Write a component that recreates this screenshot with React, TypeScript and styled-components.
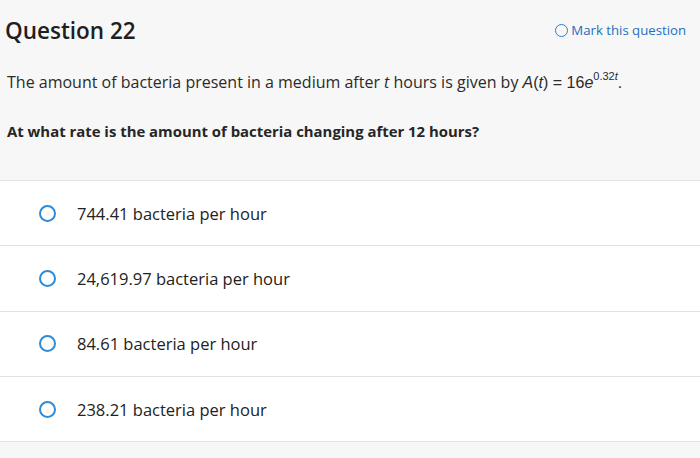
import React from 'react'
import styled, { createGlobalStyle } from 'styled-components'

const GlobalStyle = createGlobalStyle`
  html, body {
    margin: 0;
    padding: 0;
    background: #f7f7f7;
  }
  body {
    font-family: "Open Sans", Lato, sans-serif;
    color: #2b2b2b;
  }
`

const Page = styled.div`
  width: 700px;
  height: 458px;
  background: #f7f7f7;
  overflow: hidden;
`

const Header = styled.div`
  display: flex;
  align-items: center;
  justify-content: space-between;
  height: 60px;
  padding: 0 14px 0 5px;
`

const Title = styled.h1`
  margin: 0;
  font-size: 22.5px;
  font-weight: 600;
  color: #1f1f1f;
`

const MarkButton = styled.button`
  display: flex;
  align-items: center;
  gap: 3px;
  border: none;
  background: none;
  padding: 0;
  font-family: "Open Sans", sans-serif;
  font-size: 13.2px;
  font-weight: 500;
  color: #1a6fc0;
  cursor: pointer;
`

const SmallCircle = styled.span`
  display: inline-block;
  width: 11px;
  height: 11px;
  border: 1.6px solid #2c7fd0;
  border-radius: 50%;
`

const Prompt = styled.div`
  padding: 10px 7px 0;
  height: 110px;
`

const Text = styled.p`
  margin: 0;
  font-size: 16px;
  line-height: 24px;
  color: #2b2b2b;
`

const Math = styled.span`
  font-family: "Liberation Sans", Arial, sans-serif;
  font-size: 16px;
`

const Sup = styled.sup`
  font-size: 11px;
  vertical-align: 8px;
  line-height: 0;
`

const Ask = styled.p`
  margin: 26px 0 0;
  font-size: 14.9px;
  font-weight: 700;
  color: #262626;
`

const Options = styled.div`
  background: #ffffff;
  border-top: 1px solid #e2e2e2;
`

const Option = styled.label`
  display: flex;
  align-items: center;
  height: 65.3px;
  padding-left: 39px;
  border-bottom: 1px solid #e2e2e2;
  box-sizing: border-box;
  font-size: 16.5px;
  color: #222;
  cursor: pointer;
`

const Radio = styled.span`
  width: 13px;
  height: 13px;
  border: 2px solid #2f8bd6;
  border-radius: 50%;
  margin-right: 21px;
  flex-shrink: 0;
`

const answers = [
  '744.41 bacteria per hour',
  '24,619.97 bacteria per hour',
  '84.61 bacteria per hour',
  '238.21 bacteria per hour',
]

export default function App() {
  return (
    <Page>
      <GlobalStyle />
      <Header>
        <Title>Question 22</Title>
        <MarkButton>
          <SmallCircle />
          Mark this question
        </MarkButton>
      </Header>
      <Prompt>
        <Text>
          The amount of bacteria present in a medium after <i>t</i> hours is given by{' '}
          <Math>
            <i>A</i>(<i>t</i>) = 16<i>e</i>
            <Sup>0.32<i>t</i></Sup>.
          </Math>
        </Text>
        <Ask>At what rate is the amount of bacteria changing after 12 hours?</Ask>
      </Prompt>
      <Options>
        {answers.map(a => (
          <Option key={a}>
            <Radio />
            {a}
          </Option>
        ))}
      </Options>
    </Page>
  )
}
